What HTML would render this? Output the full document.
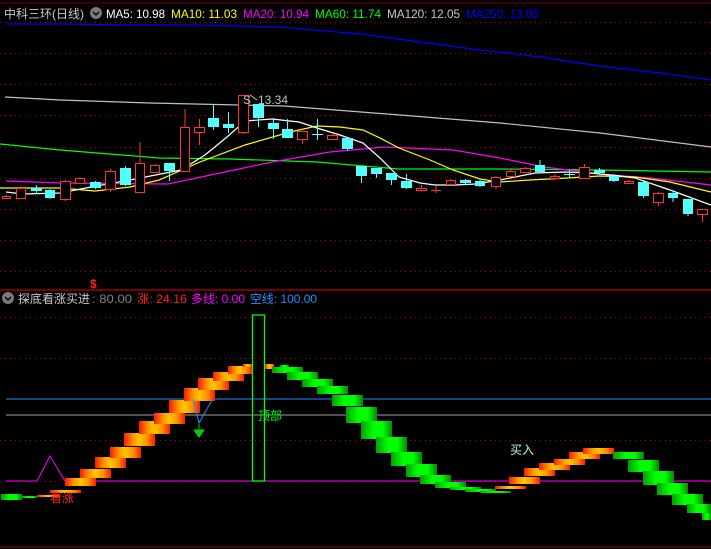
<!DOCTYPE html>
<html><head><meta charset="utf-8"><style>
html,body{margin:0;padding:0;background:#000;width:711px;height:549px;overflow:hidden}
svg{display:block}
text{font-family:"Liberation Sans","Noto Sans CJK SC",sans-serif;font-size:12px}
</style></head><body>
<svg id="s" width="711" height="549" xmlns="http://www.w3.org/2000/svg">
<defs>
<linearGradient id="rg" x1="0" x2="1" y1="0" y2="0">
<stop offset="0" stop-color="#ff1a00"/><stop offset="0.3" stop-color="#ff9a00"/><stop offset="0.5" stop-color="#ffc800"/><stop offset="0.75" stop-color="#ff9000"/><stop offset="1" stop-color="#ff1a00"/></linearGradient>
<linearGradient id="gg" x1="0" x2="1" y1="0" y2="0">
<stop offset="0" stop-color="#00a000"/><stop offset="0.4" stop-color="#00ff00"/><stop offset="0.7" stop-color="#00ff00"/><stop offset="1" stop-color="#008a00"/></linearGradient>
</defs>
<line x1="0" y1="3" x2="711" y2="3" stroke="#7a0000" stroke-width="1"/>
<g id="grid"></g>
<line x1="0" y1="290" x2="711" y2="290" stroke="#c00000" stroke-width="1.2"/>
<line x1="0" y1="547" x2="711" y2="547" stroke="#900000" stroke-width="1"/>
<polyline fill="none" stroke="#0000ff" stroke-width="1.3" points="6,24 60,24 130,25 200,25 280,27 360,34 420,42 480,50 540,57 600,66 660,73 711,80"/>
<polyline fill="none" stroke="#c0c0c0" stroke-width="1.2" points="5,97 60,100 150,103 284,106 400,115 500,123 600,133 711,147"/>
<polyline fill="none" stroke="#00ff00" stroke-width="1.2" points="0,144 60,150 159,158 230,159 317,162 399,169 500,169 600,170 711,172"/>
<polyline fill="none" stroke="#ff00ff" stroke-width="1.2" points="6,181 60,183 168,184 220,173 272,162 330,152 385,147 453,150 500,158 544,167 600,174 650,178 711,185"/>
<polyline fill="none" stroke="#ffff00" stroke-width="1.2" points="0,188 60,188 95,191 130,187 159,180 200,162 245,145 290,132 317,126 340,127 363,130 380,138 399,148 430,160 453,170 480,179 499,182 530,180 567,178 600,176 635,177 670,182 711,192"/>
<polyline fill="none" stroke="#ffffff" stroke-width="1.2" points="6,192 23,194 60,193 91,187 130,180 181,170 205,155 227,137 245,121 272,119 299,122 317,128 340,135 363,143 380,158 399,177 420,183 435,185 455,185 476,184 500,180 535,173 565,172 590,173 620,176 635,178 670,190 711,205"/>
<g id="candles"></g>
<text x="243" y="104" fill="#c0c0c0">S</text>
<text x="258" y="104" fill="#c0c0c0">13.34</text>
<line x1="250" y1="95" x2="257" y2="100" stroke="#c0c0c0"/>
<text x="4" y="18" fill="#c8c8c8" font-size="13">中科三环(日线)</text>
<circle cx="96" cy="13" r="6" fill="#7a7a7a"/><path d="M93 12l3 3 3-3" stroke="#000" stroke-width="1.4" fill="none"/>
<text x="106" y="18" fill="#ffffff" textLength="59" lengthAdjust="spacingAndGlyphs">MA5: 10.98</text>
<text x="171" y="18" fill="#ffff00" textLength="66" lengthAdjust="spacingAndGlyphs">MA10: 11.03</text>
<text x="243" y="18" fill="#ff00ff" textLength="66" lengthAdjust="spacingAndGlyphs">MA20: 10.94</text>
<text x="315" y="18" fill="#00ff00" textLength="66" lengthAdjust="spacingAndGlyphs">MA60: 11.74</text>
<text x="387" y="18" fill="#c8c8c8" textLength="73" lengthAdjust="spacingAndGlyphs">MA120: 12.05</text>
<text x="466" y="18" fill="#0000ff" textLength="73" lengthAdjust="spacingAndGlyphs">MA250: 13.05</text>
<text x="90" y="288" fill="#ff2020" font-size="11" font-weight="bold">$</text>
<circle cx="8" cy="298" r="6" fill="#7a7a7a"/><path d="M5 297l3 3 3-3" stroke="#000" stroke-width="1.4" fill="none"/>
<text x="18" y="303" fill="#c8c8c8" font-size="13">探底看涨买进</text>
<text x="92" y="303" fill="#808080" textLength="40" lengthAdjust="spacingAndGlyphs">: 80.00</text>
<text x="137" y="303" fill="#ff2020" textLength="50" lengthAdjust="spacingAndGlyphs">涨: 24.16</text>
<text x="191" y="303" fill="#ff00ff" textLength="54" lengthAdjust="spacingAndGlyphs">多线: 0.00</text>
<text x="250" y="303" fill="#1e90ff" textLength="67" lengthAdjust="spacingAndGlyphs">空线: 100.00</text>
<line x1="6" y1="399" x2="711" y2="399" stroke="#1e90ff" stroke-width="1"/>
<line x1="6" y1="415" x2="711" y2="415" stroke="#a0a0a0" stroke-width="1"/>
<polyline fill="none" stroke="#ff00ff" stroke-width="1" points="6,481 37,481 50,456 65,481 711,481"/>
<g id="blocks"></g>
<polyline fill="none" stroke="#1e90ff" stroke-width="1" points="193,399 199,423 212,400"/>
<path d="M199 424v6M194 430h10l-5 7z" stroke="#00d000" fill="#00d000"/>
<rect x="252.5" y="315" width="12" height="166" fill="none" stroke="#00ff00" stroke-width="1.3"/>
<text x="258" y="420" fill="#00ff00" font-size="13">顶部</text>
<text x="50" y="502" fill="#ff2020" font-size="14">看涨</text>
<text x="510" y="454" fill="#b0ffe0" font-size="12">买入</text>
</svg>
<script>
var NS="http://www.w3.org/2000/svg";
function el(p,t,a){var e=document.createElementNS(NS,t);for(var k in a)e.setAttribute(k,a[k]);document.getElementById(p).appendChild(e);return e;}
[22,53,84,115,147,178,209,240,271,317,358,440,481].forEach(function(y){el("grid","line",{x1:0,y1:y+.5,x2:711,y2:y+.5,stroke:"#b00000","stroke-dasharray":"1,4"});});
var C=[[2,9,196,198,195,199,1],[16,10,188,198,186,199,1],[31,11,188,191,185,194,0],[45,10,190,198,189,199,0],[60,11,181,199,180,201,1],[75,10,178,183,177,183,1],[90,11,182,188,181,189,0],[105,11,171,189,169,192,1],[120,11,168,185,166,186,0],[135,10,163,192,142,193,1],[150,10,165,172,164,173,1],[164,11,163,171,163,181,0],[180,10,127,171,109,171,1],[194,11,127,132,119,145,1],[208,11,118,127,104,130,0],[223,11,124,128,112,133,0],[238,11,95,132,95,134,1],[253,11,104,118,104,127,0],[268,11,123,129,118,139,0],[282,11,129,138,119,138,0],[297,11,131,139,131,144,1],[312,11,134,134,119,140,0],[327,11,135,139,133,139,1],[342,11,138,149,137,151,0],[356,11,166,176,166,183,0],[371,11,168,174,168,178,0],[386,11,173,180,173,185,0],[401,11,181,188,174,189,0],[416,11,188,190,185,190,1],[431,10,190,190,186,193,1],[446,10,180,184,179,185,1],[460,11,180,183,179,185,0],[475,10,181,186,180,187,0],[491,10,177,186,176,189,1],[506,10,171,176,168,177,1],[520,11,168,172,167,173,1],[535,10,165,172,160,173,0],[550,10,176,178,174,180,1],[564,11,174,174,170,177,0],[579,11,167,178,164,178,1],[594,11,170,173,168,175,0],[609,10,176,181,174,182,0],[624,10,181,183,180,184,1],[638,11,182,196,181,198,0],[653,11,193,202,192,206,1],[668,10,193,198,192,202,0],[683,10,199,214,199,216,0],[697,11,209,214,209,222,1]];
C.forEach(function(c){var x=c[0],w=c[1],m=x+w/2,col=c[6]?"#ff3232":"#54ffff";
el("candles","line",{x1:m,y1:c[4],x2:m,y2:c[5],stroke:col});
if(c[6]){el("candles","rect",{x:x+.5,y:c[2]+.5,width:w-1,height:Math.max(c[3]-c[2],0.1),fill:"#000",stroke:col});
 if(c[3]==c[2])el("candles","line",{x1:x,y1:c[2]+.5,x2:x+w,y2:c[2]+.5,stroke:col});}
else{if(c[3]-c[2]<1)el("candles","line",{x1:x,y1:c[2]+.5,x2:x+w,y2:c[2]+.5,stroke:col});else el("candles","rect",{x:x,y:c[2],width:w,height:c[3]-c[2],fill:col});}
});
var B=[[1,22,494,500,"g"],[22,37,496,498,"g"],[37,60,495,497,"r"],[50,81,490,493,"r"],[65,96,478,486,"r"],[80,111,469,478,"r"],[95,126,457,468,"r"],[110,141,447,458,"r"],[124,155,433,446,"r"],[139,170,421,434,"r"],[154,185,413,424,"r"],[169,200,400,413,"r"],[184,215,388,401,"r"],[198,229,378,390,"r"],[213,244,372,381,"r"],[228,252,366,374,"r"],[243,252,364,367,"r"],[265,274,364,369,"r"],
[280,289,365,368,"g"],[272,303,367,373,"g"],[287,318,372,380,"g"],[302,333,379,387,"g"],[317,348,386,394,"g"],[332,363,395,406,"g"],[346,377,407,423,"g"],[361,392,421,439,"g"],[376,407,437,453,"g"],[391,422,452,466,"g"],[406,437,464,477,"g"],[420,451,475,484,"g"],[435,466,482,488,"g"],[450,481,487,490,"g"],[465,496,489,492,"g"],[480,511,491,493,"g"],
[495,526,486,489,"r"],[509,540,477,484,"r"],[524,555,468,476,"r"],[539,570,463,470,"r"],[554,585,459,465,"r"],[569,600,452,459,"r"],[583,614,448,454,"r"],
[613,644,452,459,"g"],[628,659,460,472,"g"],[643,674,471,485,"g"],[657,688,483,495,"g"],[672,703,494,505,"g"],[687,711,504,513,"g"],[702,711,513,520,"g"]];
B.forEach(function(b){el("blocks","rect",{x:b[0],y:b[2],width:b[1]-b[0],height:b[3]-b[2],fill:b[4]=="r"?"url(#rg)":"url(#gg)"});});
</script>
</body></html>
